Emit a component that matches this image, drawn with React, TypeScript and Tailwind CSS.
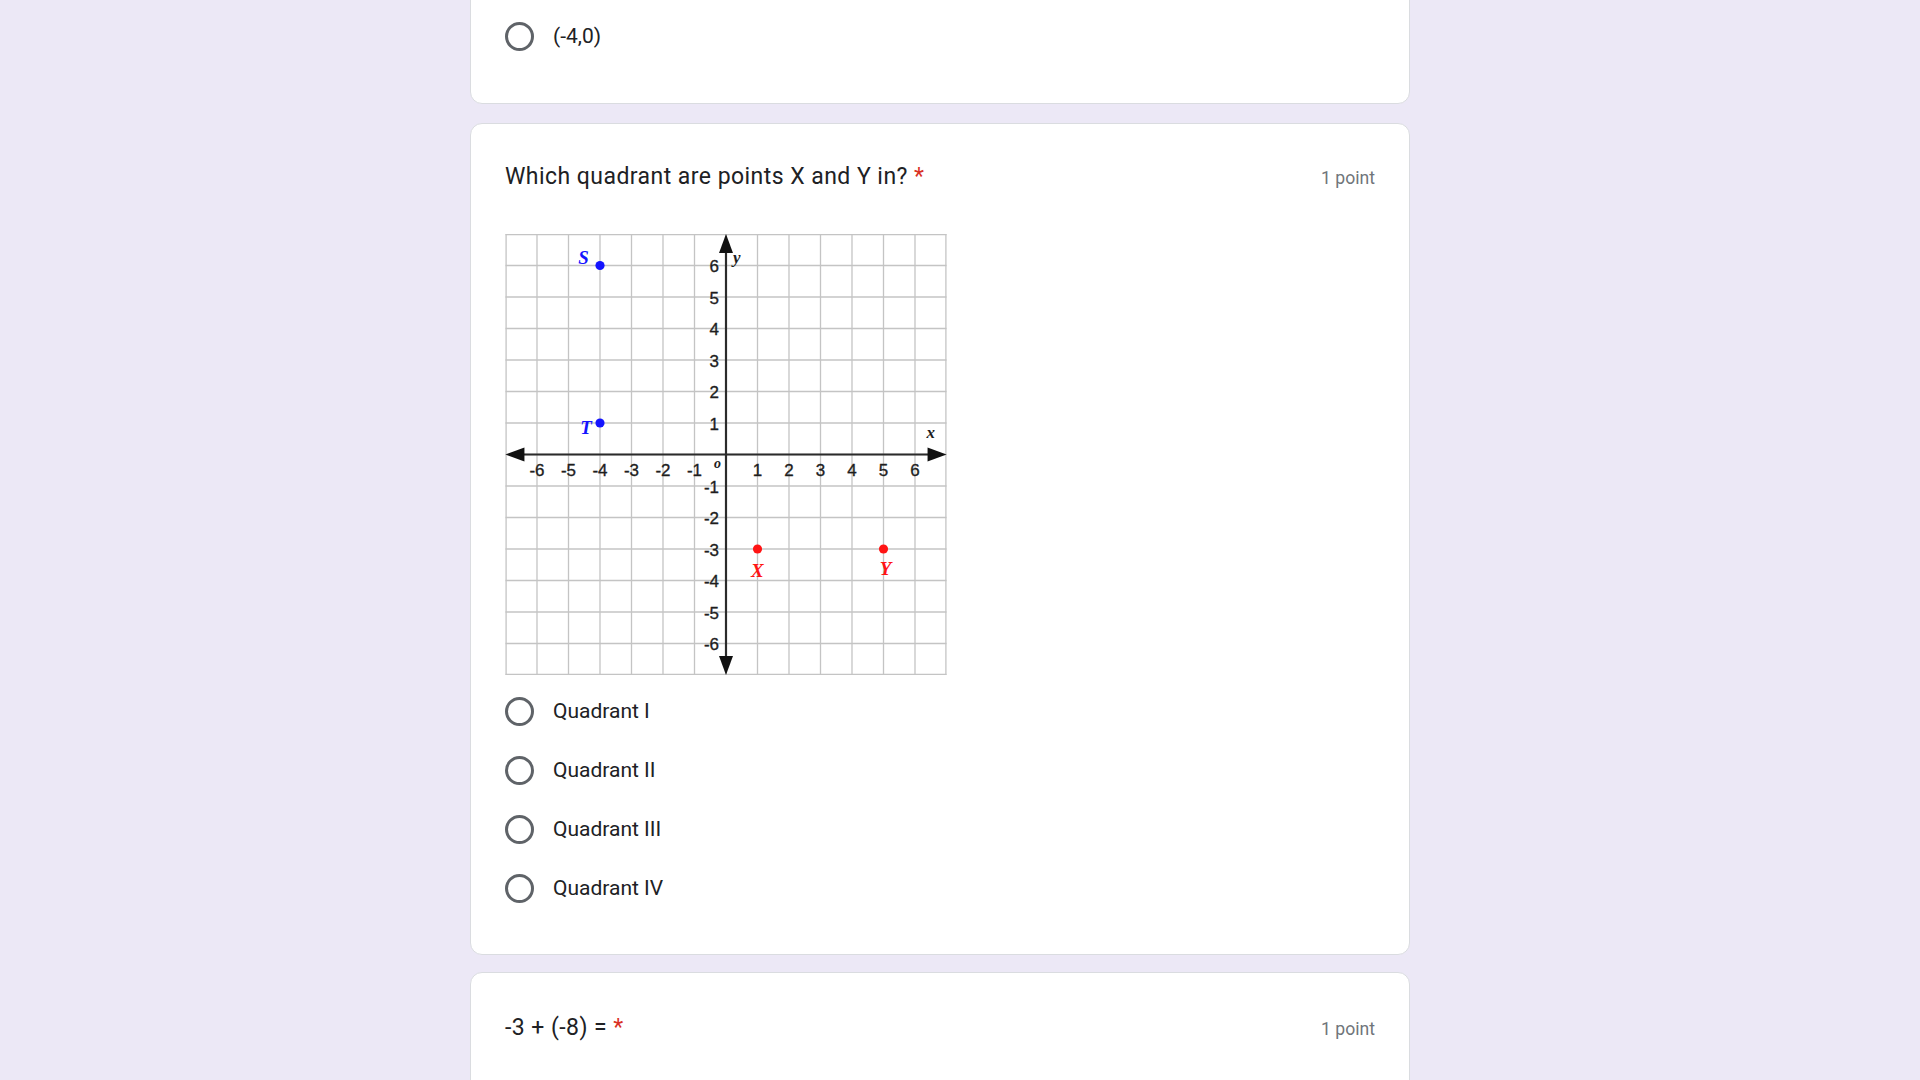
import React from 'react'

const C = 442 / 14
const O = 221

function Radio({ label }: { label: string }) {
  return (
    <div className="flex items-center h-[59px]">
      <div className="w-[29px] h-[29px] rounded-full border-[3px] border-[#5f6368] shrink-0" />
      <span className="ml-[19px] text-[21px] text-[#202124] font-[Roboto,sans-serif]">{label}</span>
    </div>
  )
}

function Title({ text }: { text: string }) {
  return (
    <div className="flex items-baseline justify-between font-[Roboto,sans-serif]">
      <div className="text-[23px] leading-[30px] tracking-[0.45px] text-[#202124]">
        {text} <span className="text-[#d93025]">*</span>
      </div>
      <div className="text-[17.6px] text-[#70757a]">1 point</div>
    </div>
  )
}

function Graph() {
  const lines = Array.from({ length: 15 }, (_, i) => Math.min(Math.max(i * C, 0.6), 441.4))
  const nums = [-6, -5, -4, -3, -2, -1, 1, 2, 3, 4, 5, 6]
  const px = (n: number) => O + n * C
  const py = (n: number) => O - n * C
  const serif = '"Liberation Serif", serif'
  const sans = '"Liberation Sans", Arial, sans-serif'
  return (
    <svg width="442" height="441" viewBox="0 0 442 442" className="block">
      <rect x="0" y="0" width="442" height="442" fill="#fff" />
      {lines.map((v, i) => (
        <g key={i}>
          <line x1={v} y1="0" x2={v} y2="442" stroke="#c4c4c4" strokeWidth="1.3" />
          <line x1="0" y1={v} x2="442" y2={v} stroke="#c4c4c4" strokeWidth="1.3" />
        </g>
      ))}
      {/* axes */}
      <line x1="12" y1={O} x2="430" y2={O} stroke="#2b2b2b" strokeWidth="2.2" />
      <line x1={O} y1="12" x2={O} y2="430" stroke="#2b2b2b" strokeWidth="2.2" />
      <polygon points={`0,${O} 19,${O - 7} 19,${O + 7}`} fill="#111" />
      <polygon points={`442,${O} 423,${O - 7} 423,${O + 7}`} fill="#111" />
      <polygon points={`${O},0 ${O - 7},19 ${O + 7},19`} fill="#111" />
      <polygon points={`${O},442 ${O - 7},423 ${O + 7},423`} fill="#111" />
      {/* x labels */}
      {nums.map(n => (
        <text key={'x' + n} x={px(n)} y={243} textAnchor="middle" fontSize="17" fill="#1e1e1e" stroke="#1e1e1e" strokeWidth="0.35" fontFamily={sans}>
          {n}
        </text>
      ))}
      {/* y labels */}
      {nums.map(n => (
        <text key={'y' + n} x={214} y={py(n) + 7} textAnchor="end" fontSize="17" fill="#1e1e1e" stroke="#1e1e1e" strokeWidth="0.35" fontFamily={sans}>
          {n}
        </text>
      ))}
      <text x="209" y="235" fontSize="14" fontStyle="italic" fontWeight="bold" fill="#1e1e1e" fontFamily={serif}>o</text>
      <text x="228" y="29" fontSize="17" fontStyle="italic" fontWeight="bold" fill="#1e1e1e" fontFamily={serif}>y</text>
      <text x="422" y="204" fontSize="17" fontStyle="italic" fontWeight="bold" fill="#1e1e1e" fontFamily={serif}>x</text>
      {/* points */}
      <circle cx={px(-4)} cy={py(6)} r="4.6" fill="#1414ff" />
      <circle cx={px(-4)} cy={py(1)} r="4.6" fill="#1414ff" />
      <circle cx={px(1)} cy={py(-3)} r="4.6" fill="#ff1414" />
      <circle cx={px(5)} cy={py(-3)} r="4.6" fill="#ff1414" />
      <text x="73" y="30" fontSize="19" fontStyle="italic" fontWeight="bold" fill="#1414ff" fontFamily={serif}>S</text>
      <text x="75" y="200" fontSize="19" fontStyle="italic" fontWeight="bold" fill="#1414ff" fontFamily={serif}>T</text>
      <text x="246" y="344" fontSize="19" fontStyle="italic" fontWeight="bold" fill="#ff1414" fontFamily={serif}>X</text>
      <text x="375" y="342" fontSize="19" fontStyle="italic" fontWeight="bold" fill="#ff1414" fontFamily={serif}>Y</text>
    </svg>
  )
}

export default function App() {
  return (
    <div className="h-[1080px] overflow-hidden bg-[#ece8f6]">
      <div className="ml-[470px] w-[940px] -mt-[29px] flex flex-col gap-[19px]">
        {/* previous question (cut off) */}
        <div className="bg-white rounded-[12px] border border-[#dadce0] px-[34px] pt-[35px] pb-[37px]">
          <Radio label="(-4,0)" />
        </div>

        {/* quadrant question */}
        <div className="bg-white rounded-[12px] border border-[#dadce0] px-[34px] pt-[38px] pb-[36px]">
          <Title text="Which quadrant are points X and Y in?" />
          <div className="mt-[42px]">
            <Graph />
          </div>
          <div className="mt-[7px] flex flex-col">
            <Radio label="Quadrant I" />
            <Radio label="Quadrant II" />
            <Radio label="Quadrant III" />
            <Radio label="Quadrant IV" />
          </div>
        </div>

        {/* next question */}
        <div className="bg-white rounded-[12px] border border-[#dadce0] px-[34px] pt-[40px] pb-[200px] -mt-[2px]">
          <Title text="-3 + (-8) =" />
        </div>
      </div>
    </div>
  )
}
